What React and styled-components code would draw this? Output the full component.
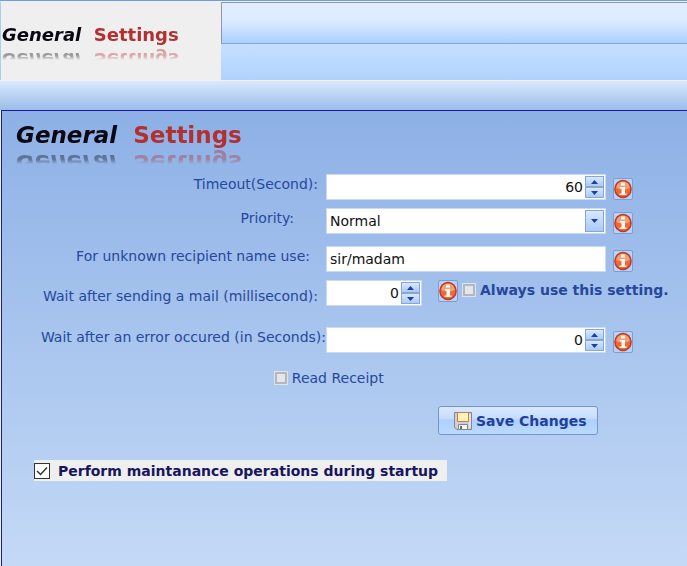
import React, { useState } from "react";
import styled, { createGlobalStyle } from "styled-components";

const GlobalStyle = createGlobalStyle`
  * {
    box-sizing: border-box;
  }
  body {
    margin: 0;
    font-family: Verdana, "DejaVu Sans", sans-serif;
    font-size: 14px;
    color: #27479c;
  }
`;

const Page = styled.div`
  min-height: 100vh;
  display: flex;
  flex-direction: column;
  border-top: 1px solid #6f9de0;
  background: #edf2f9;
`;

const Header = styled.header`
  display: flex;
  height: 79px;
  padding-top: 1px;
`;

const Brand = styled.div`
  width: 221px;
  flex: none;
  padding: 21px 0 0 1px;
  background: #efefef;
  border-left: 1px solid #a9cbf5;
`;

const HeaderBars = styled.div`
  flex: 1;
  display: flex;
  flex-direction: column;
`;

const TopBar = styled.div`
  height: 42px;
  border: solid #8e97ae;
  border-width: 1px 0 1px 1px;
  border-bottom-color: #81a7e0;
  background: linear-gradient(#e1eeff 0%, #dcebff 45%, #abd0ff 100%);
`;

const SubBar = styled.div`
  flex: 1;
  background: linear-gradient(#c6dfff, #b0d2ff);
`;

const Strip = styled.div`
  height: 30px;
  border-top: 1px solid #f0f2f5;
  background: linear-gradient(#dbe9fd, #9bbdea);
`;

const Panel = styled.main`
  flex: 1;
  border: solid #1c1c9c;
  border-width: 1px 0 0 1px;
  margin-left: 1px;
  background: linear-gradient(#8db0e6, #a8c5ee 50%, #c4d9f6);
`;

const Heading = styled.h1`
  display: inline-block;
  margin: 0;
  font-size: ${(props) => (props.$large ? "23px" : "18px")};
  line-height: ${(props) => (props.$large ? "28px" : "24px")};
  font-weight: bold;
  white-space: pre;
  color: #b23030;
  -webkit-box-reflect: below 0
    linear-gradient(transparent 46%, rgba(0, 0, 0, 0.35) 62%, rgba(0, 0, 0, 0.45));

  em {
    color: #0a0812;
  }
`;

const PanelTitle = styled.div`
  height: 63px;
  padding: 10px 0 0 14px;
`;

const Row = styled.div`
  display: grid;
  grid-template-columns: 324fr 280fr 81fr;
  min-height: 26px;
  margin-bottom: ${(props) => props.$space || 8}px;
`;

const Label = styled.label`
  align-self: ${(props) => (props.$low ? "end" : "start")};
  line-height: 20px;
  padding-right: ${(props) => props.$inset || 0}px;
  text-align: right;
  white-space: nowrap;
`;

const Field = styled.div`
  display: grid;
  grid-template-columns: 1fr auto;
  height: 26px;
  width: ${(props) => (props.$short ? "96px" : "auto")};
  padding: 1px;
  border: 1px solid #c9daf2;
  background: white;
`;

const Input = styled.input`
  min-width: 0;
  width: 100%;
  padding: 0 2px;
  border: none;
  outline: none;
  background: transparent;
  font: inherit;
  color: #111;
  text-align: ${(props) => (props.type === "number" ? "right" : "left")};
  appearance: textfield;

  &::-webkit-inner-spin-button {
    display: none;
  }
`;

const Select = styled.select`
  grid-area: 1 / 1 / 2 / 3;
  width: 100%;
  padding: 0 2px;
  border: none;
  outline: none;
  appearance: none;
  background: transparent;
  font: inherit;
  color: #111;
`;

const Arrows = styled.div`
  display: grid;
  grid-template-rows: 1fr 1fr;
  width: 19px;
`;

const ArrowButton = styled.button`
  display: flex;
  align-items: center;
  justify-content: center;
  padding: 0;
  border: 1px solid #8ca6d4;
  background: linear-gradient(#d8e8ff, #a9caf8);
`;

const DropArrow = styled.span`
  grid-area: 1 / 2;
  width: 19px;
  display: flex;
  align-items: center;
  justify-content: center;
  border: 1px solid #8ca6d4;
  background: linear-gradient(#d8e8ff, #a9caf8);
  pointer-events: none;
`;

const InfoButton = styled.button`
  width: 20px;
  height: 22px;
  display: flex;
  align-items: center;
  justify-content: center;
  align-self: ${(props) => (props.$high ? "start" : "end")};
  margin-left: ${(props) => (props.$high ? "16px" : "7px")};
  padding: 0;
  border: 1px solid #7d9dd3;
  border-radius: 2px;
  background: #b9d3f8;
`;

const WaitGroup = styled.div`
  grid-column: 2 / 4;
  display: flex;
  align-items: flex-start;
`;

const CheckLabel = styled.label`
  display: flex;
  align-items: center;
  gap: 4px;
  line-height: 20px;
  white-space: nowrap;
`;

const AlwaysLabel = styled(CheckLabel)`
  margin-left: 4px;
  font-weight: bold;
`;

const ReceiptLabel = styled(CheckLabel)`
  grid-column: 1 / 3;
  justify-self: start;
  margin-left: 45%;
`;

const FlatCheckbox = styled.input`
  appearance: none;
  flex: none;
  width: 14px;
  height: 14px;
  margin: 0;
  border: 1px solid #dfe3ea;
  outline: 2px solid #b3b6bd;
  outline-offset: -3px;
  background: #e4e6ea;

  &:checked {
    background: #27479c;
  }
`;

const Actions = styled.div`
  display: grid;
  grid-template-columns: 436fr 249fr;
  margin-top: 15px;
`;

const SaveButton = styled.button`
  grid-column: 2;
  justify-self: start;
  height: 29px;
  display: flex;
  align-items: center;
  gap: 4px;
  padding: 0 10px 0 15px;
  border: 1px solid #7594cd;
  border-radius: 3px;
  background: linear-gradient(#d9e9ff 0%, #c8deff 40%, #aed0fe 50%, #bcdaff 100%);
  font: inherit;
  font-weight: bold;
  color: #223f9b;
  white-space: nowrap;
`;

const StartupLabel = styled.label`
  display: inline-flex;
  align-items: center;
  gap: 8px;
  height: 21px;
  margin: 25px 0 0 32px;
  padding-right: 9px;
  background: #efefef;
  font-weight: bold;
  color: #18155f;
  white-space: nowrap;
`;

const BoxWrap = styled.span`
  display: grid;
  place-items: center;

  > * {
    grid-area: 1 / 1;
  }
  svg {
    pointer-events: none;
    visibility: hidden;
  }
  input:checked + svg {
    visibility: visible;
  }
`;

const Checkbox = styled.input`
  appearance: none;
  width: 16px;
  height: 16px;
  margin: 0;
  border: 1px solid #333;
  background: white;
`;

const Arrow = ({ up }) => (
  <svg width="7" height="4" viewBox="0 0 7 4" aria-hidden="true">
    <path d={up ? "M0 4 3.5 0 7 4Z" : "M0 0h7L3.5 4Z"} fill="#1f3f9c" />
  </svg>
);

const Info = ({ topic, high }) => (
  <InfoButton type="button" $high={high} aria-label={`About ${topic}`}>
    <svg width="18" height="20" viewBox="0 0 18 20">
      <ellipse cx="9" cy="10" rx="8.8" ry="9.2" fill="#bf3820" />
      <ellipse cx="9" cy="10" rx="7.4" ry="7.8" fill="#ec6837" />
      <path d="M2.5 9C2.5 .8 15.5 .8 15.5 9C12 11 6 11 2.5 9Z" fill="#f2a07c" />
      <path d="M7 3.5h4v3H7zM6 8h5v6.500h1.500V16h-7v-1.500H7.500v-5H6z" fill="#fff6e8" />
    </svg>
  </InfoButton>
);

const DiskIcon = () => (
  <svg width="18" height="18" viewBox="0 0 18 18" aria-hidden="true">
    <path d="M.5 .5h17v17H3L.5 15.5z" fill="#cfcfd4" stroke="#85858e" />
    <path d="M3.5 .5h11v9h-11z" fill="#fdf3bb" stroke="#d77548" />
    <path d="M4.5 12.5h9v5h-9z" fill="#f4f4f6" stroke="#85858e" />
    <path d="M6 14h2v3H6z" fill="#6c6c75" />
    <path d="M16 2v14" stroke="#f4f4f6" />
  </svg>
);

const Title = ({ large, as }) => (
  <Heading $large={large} as={as}>
    <em>General</em>
    {"  "}Settings
  </Heading>
);

const NumberField = ({ id, value, onChange, short }) => (
  <Field $short={short}>
    <Input
      id={id}
      type="number"
      min="0"
      value={value}
      onChange={(e) => onChange(Number(e.target.value))}
    />
    <Arrows>
      <ArrowButton type="button" aria-label="Increase" onClick={() => onChange(value + 1)}>
        <Arrow up />
      </ArrowButton>
      <ArrowButton
        type="button"
        aria-label="Decrease"
        onClick={() => onChange(Math.max(0, value - 1))}
      >
        <Arrow />
      </ArrowButton>
    </Arrows>
  </Field>
);

export default function App() {
  const [timeout, setTimeoutValue] = useState(60);
  const [mailWait, setMailWait] = useState(0);
  const [errorWait, setErrorWait] = useState(0);

  return (
    <Page>
      <GlobalStyle />
      <Header>
        <Brand>
          <Title as="div" />
        </Brand>
        <HeaderBars>
          <TopBar />
          <SubBar />
        </HeaderBars>
      </Header>
      <Strip />
      <Panel>
        <PanelTitle>
          <Title large />
        </PanelTitle>
        <form onSubmit={(e) => e.preventDefault()}>
          <Row>
            <Label htmlFor="timeout" $inset={8}>Timeout(Second):</Label>
            <NumberField id="timeout" value={timeout} onChange={setTimeoutValue} />
            <Info topic="timeout" />
          </Row>
          <Row $space={12}>
            <Label htmlFor="priority" $inset={32}>Priority:</Label>
            <Field>
              <Select id="priority" defaultValue="Normal">
                <option>Low</option>
                <option>Normal</option>
                <option>High</option>
              </Select>
              <DropArrow>
                <Arrow />
              </DropArrow>
            </Field>
            <Info topic="priority" />
          </Row>
          <Row>
            <Label htmlFor="recipient" $inset={16}>For unknown recipient name use:</Label>
            <Field>
              <Input id="recipient" type="text" defaultValue="sir/madam" />
            </Field>
            <Info topic="recipient name" />
          </Row>
          <Row $space={21}>
            <Label htmlFor="mailWait" $inset={8} $low>
              Wait after sending a mail (millisecond):
            </Label>
            <WaitGroup>
              <NumberField id="mailWait" short value={mailWait} onChange={setMailWait} />
              <Info topic="wait after sending" high />
              <AlwaysLabel>
                <FlatCheckbox type="checkbox" />
                Always use this setting.
              </AlwaysLabel>
            </WaitGroup>
          </Row>
          <Row $space={12}>
            <Label htmlFor="errorWait">Wait after an error occured (in Seconds):</Label>
            <NumberField id="errorWait" value={errorWait} onChange={setErrorWait} />
            <Info topic="wait after an error" />
          </Row>
          <Row>
            <ReceiptLabel>
              <FlatCheckbox type="checkbox" />
              Read Receipt
            </ReceiptLabel>
          </Row>
          <Actions>
            <SaveButton type="submit">
              <DiskIcon />
              Save Changes
            </SaveButton>
          </Actions>
          <StartupLabel>
            <BoxWrap>
              <Checkbox type="checkbox" defaultChecked />
              <svg width="16" height="16" viewBox="0 0 16 16" aria-hidden="true">
                <path d="M3 8l3.5 3.5L13 4.5" fill="none" stroke="#333" strokeWidth="1.5" />
              </svg>
            </BoxWrap>
            Perform maintanance operations during startup
          </StartupLabel>
        </form>
      </Panel>
    </Page>
  );
}
